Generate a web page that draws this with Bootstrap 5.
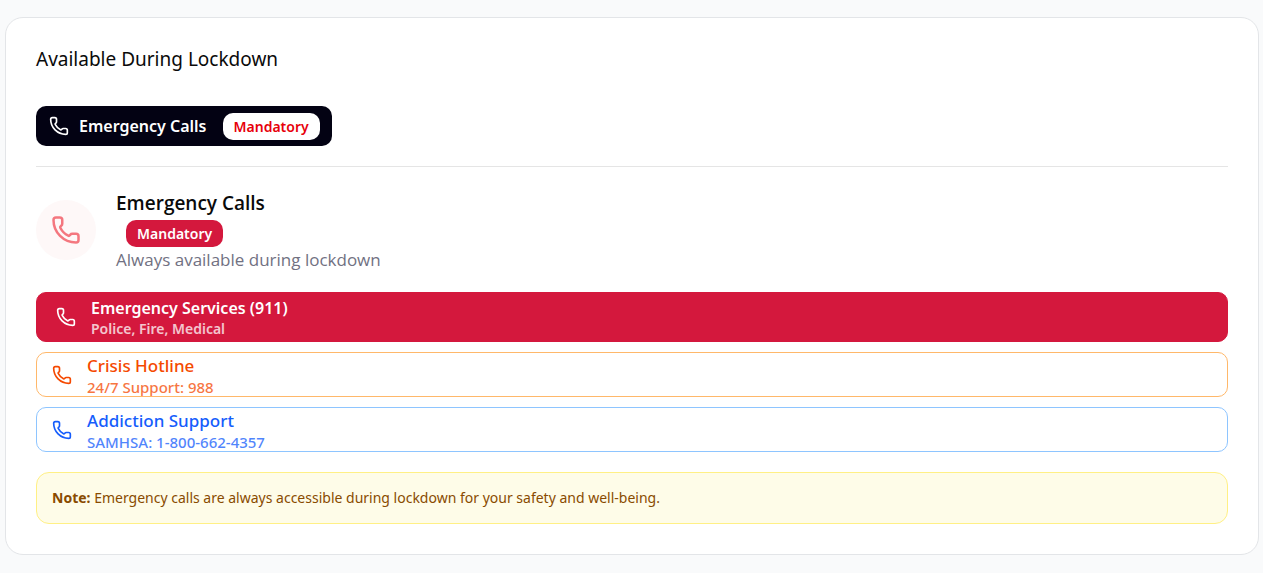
<!DOCTYPE html>
<html lang="en">
<head>
<meta charset="utf-8">
<meta name="viewport" content="width=device-width, initial-scale=1">
<title>Available During Lockdown</title>
<link href="https://cdn.jsdelivr.net/npm/bootstrap@5.3.0/dist/css/bootstrap.min.css" rel="stylesheet">
<style>
  body { background: #f9fafb; color: #0a0a0a; font-family: "Noto Sans", "Open Sans", sans-serif; padding: 17px 4px 18px 5px; }
  .panel { border: 1px solid #e3e5e8; border-radius: 18px; padding: 30px; }
  .panel-title { font-size: 19px; line-height: 23px; font-weight: 400; margin-bottom: 35px; }
  .ico { width: 20px; height: 20px; fill: none; stroke: currentColor; stroke-width: 2; stroke-linecap: round; stroke-linejoin: round; flex: none; }
  .ico-lg { width: 30px; height: 30px; }
  .tab-btn { width: fit-content; background: #030213; color: #fff; height: 40px; border: 0; border-radius: 10px; font-size: 16px; line-height: 25px; font-weight: 600; padding: 0 12px 0 13px; gap: 10px; }
  .tab-btn:hover { background: #030213; color: #fff; }
  .pill { border-radius: 10px; font-size: 14px; line-height: 28px; height: 27px; padding: 0 11px; font-weight: 600; }
  .pill-light { background: #fff; color: #e7000b; margin-left: 6px; }
  .pill-red { background: #d4183d; color: #fff; margin-left: 10px; }
  .rule { border-top: 1px solid #e5e5e5; margin: 20px 0; opacity: 1; }
  .round { width: 60px; height: 60px; border-radius: 50%; background: #fef8f8; color: #f4777f; }
  .feature { gap: 20px; margin-bottom: 20px; }
  .feature-title, .feature-sub { font-family: "Open Sans", "Noto Sans", sans-serif; }
  .feature-title { font-size: 19px; line-height: 33px; font-weight: 600; margin: 0; }
  .feature-sub { font-size: 17px; line-height: 25px; color: #717182; }
  .calls { gap: 10px; }
  .call { height: 45px; border: 1px solid; border-radius: 10px; background: #fff; padding: 0 15px; gap: 15px; font-size: 17px; line-height: 22px; font-weight: 500; text-align: left; }
  .call span { padding-top: 2px; }
  .call small { display: block; font-size: 15px; line-height: 20px; opacity: .75; }
  .call-911, .call-911:hover { height: 50px; background: #d4183d; border-color: #d4183d; color: #fff; padding: 0 19px; font-size: 16px; font-weight: 600; }
  .call-911 small { font-size: 14px; }
  .call-crisis, .call-crisis:hover { color: #f54900; border-color: #ffb86a; }
  .call-addiction, .call-addiction:hover { color: #155dfc; border-color: #8ec5ff; }
  .note { background: #fefce8; border: 1px solid #fff085; border-radius: 13px; color: #894b00; padding: 15px; font-size: 14px; line-height: 20px; margin-top: 20px; }
</style>
</head>
<body>
<svg class="d-none" aria-hidden="true">
  <symbol id="phone" viewBox="0 0 24 24"><path d="M13.832 16.568a1 1 0 0 0 1.213-.303l.355-.465A2 2 0 0 1 17 15h3a2 2 0 0 1 2 2v3a2 2 0 0 1-2 2A18 18 0 0 1 2 4a2 2 0 0 1 2-2h3a2 2 0 0 1 2 2v3a2 2 0 0 1-.8 1.6l-.468.351a1 1 0 0 0-.292 1.233 14 14 0 0 0 6.392 6.384"/></symbol>
</svg>
<main class="panel bg-white">
  <h1 class="panel-title">Available During Lockdown</h1>
  <button type="button" class="btn tab-btn d-flex align-items-center">
    <svg class="ico"><use href="#phone"/></svg>
    <span>Emergency Calls</span>
    <span class="pill pill-light">Mandatory</span>
  </button>
  <hr class="rule">
  <section class="feature d-flex align-items-center">
    <div class="round d-flex align-items-center justify-content-center flex-shrink-0">
      <svg class="ico ico-lg"><use href="#phone"/></svg>
    </div>
    <div>
      <h2 class="feature-title">Emergency Calls</h2>
      <div class="d-flex"><span class="pill pill-red">Mandatory</span></div>
      <div class="feature-sub">Always available during lockdown</div>
    </div>
  </section>
  <div class="calls d-grid">
    <button type="button" class="btn call call-911 d-flex align-items-center">
      <svg class="ico"><use href="#phone"/></svg>
      <span>Emergency Services (911)<small>Police, Fire, Medical</small></span>
    </button>
    <button type="button" class="btn call call-crisis d-flex align-items-center">
      <svg class="ico"><use href="#phone"/></svg>
      <span>Crisis Hotline<small>24/7 Support: 988</small></span>
    </button>
    <button type="button" class="btn call call-addiction d-flex align-items-center">
      <svg class="ico"><use href="#phone"/></svg>
      <span>Addiction Support<small>SAMHSA: 1-800-662-4357</small></span>
    </button>
  </div>
  <div class="note"><strong>Note:</strong> Emergency calls are always accessible during lockdown for your safety and well-being.</div>
</main>
<script src="https://cdn.jsdelivr.net/npm/bootstrap@5.3.0/dist/js/bootstrap.bundle.min.js"></script>
</body>
</html>
